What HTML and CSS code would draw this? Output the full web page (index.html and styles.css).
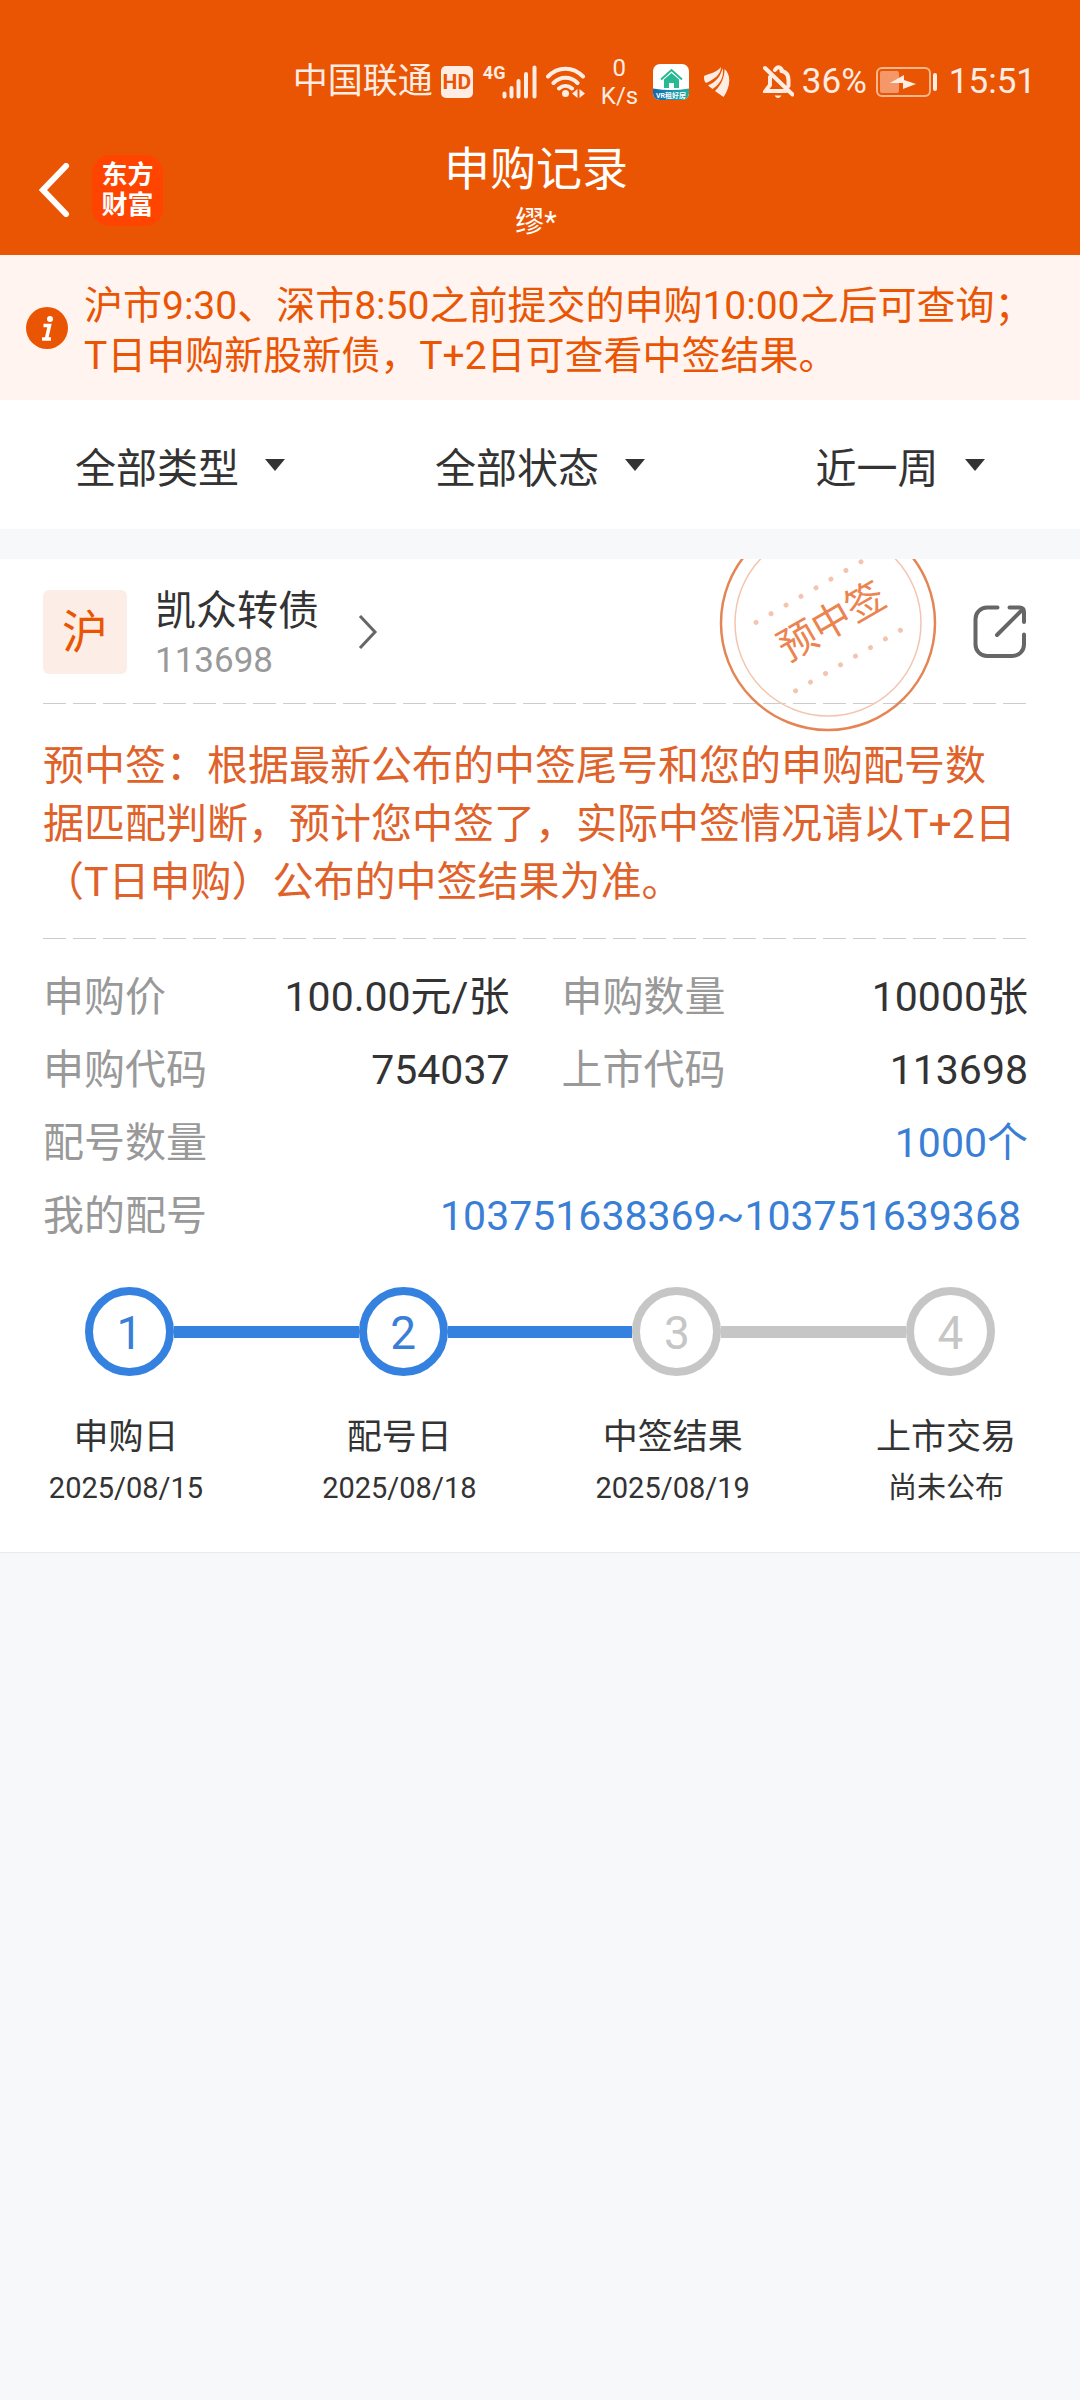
FILE: index.html
```html
<!DOCTYPE html>
<html lang="zh-CN">
<head>
<meta charset="utf-8">
<meta name="viewport" content="width=device-width, initial-scale=1">
<title>申购记录</title>
<link rel="stylesheet" href="styles.css">
</head>
<body>
<header class="header">
  <div class="status">
    <span class="status-text">中国联通</span>
    <span class="hd">HD</span>
    <span class="cell">
      <span class="cell-type">4G</span>
      <svg class="signal" width="35" height="34" viewBox="0 0 35 34" aria-hidden="true">
        <path d="M2.5 28.500v3M9.500 23v8.500M16.500 16v15.500M24 9v22.500M32.500 2.500v29" />
      </svg>
    </span>
    <svg class="wifi" width="40" height="34" viewBox="0 0 40 34" aria-hidden="true">
      <path class="line" d="M2 11.500C12 1 27 1 37 11.500M7.500 18c7-7 17-7 24 0M13 23.500c4-3.500 9-3.500 13 0"/>
      <circle cx="19.500" cy="28.500" r="3.500"/>
      <path d="M31.500 24v9l-5.500-4.500zM33.500 24v9l5.500-4.500z"/>
    </svg>
    <span class="speed"><span>0</span><span>K/s</span></span>
    <svg class="app" width="36" height="36" viewBox="0 0 36 36" aria-hidden="true">
      <defs>
        <linearGradient id="band"><stop offset="0" stop-color="#1267b5"/><stop offset="1" stop-color="#1fb2a0"/></linearGradient>
        <clipPath id="tile"><rect width="36" height="36" rx="7"/></clipPath>
      </defs>
      <g clip-path="url(#tile)">
        <rect width="36" height="36" fill="#fff"/>
        <path d="M0 24.500q18 3 36 0V36H0z" fill="url(#band)"/>
        <path d="M8 15.500L18.500 6 29 15.500" fill="none" stroke="#26b992" stroke-width="2"/>
        <path d="M11 15.500l7.500-6.500 7.500 6.500V24h-5v-5h-5v5h-5z" fill="#26b992"/>
        <text x="18" y="34" text-anchor="middle" class="app-label">VR租好房</text>
      </g>
    </svg>
    <svg class="wing" width="26" height="31" viewBox="0 0 26 31" aria-hidden="true">
      <path d="M0 9C6 6 12 6 17 0c0 7-6 12-15 16C0 14 0 12 0 9z"/>
      <path d="M4 18.500C12 15 17 9 18.500 1c2 8-2 16-10 21z"/>
      <path d="M11 24C17 18 20.500 11 20.500 2c7 6 6 18-1 28z"/>
    </svg>
    <svg class="bell" width="31" height="34" viewBox="0 0 31 34" aria-hidden="true">
      <path class="line" d="M12 5q3.500-5.500 7 0M18.500 6c5 1 7 5 7 9v6M7 12v8l-4.500 6H23M2 3l27.500 26.500"/>
      <path d="M11.500 30.500h7q-3.500 5-7 0z"/>
    </svg>
    <span class="status-text">36%</span>
    <svg class="battery" width="62" height="30" viewBox="0 0 62 30" aria-hidden="true">
      <rect x="1" y="1" width="53" height="28" rx="5" fill="none" stroke="#fbb68c" stroke-width="2"/>
      <rect x="4" y="4" width="19" height="22" rx="2" fill="#f4986a"/>
      <path d="M14 16l14-8v5l12 4-13 5v-6z" fill="#ffece2"/>
      <rect x="57" y="6" width="4" height="18" rx="2" fill="#ffece2"/>
    </svg>
    <time class="status-text">15:51</time>
  </div>
  <div class="titlebar">
    <div class="brand">
      <button class="back" type="button" aria-label="返回">
        <svg width="31" height="54" viewBox="0 0 31 54" aria-hidden="true"><path d="M27 3L4 27l23 24"/></svg>
      </button>
      <div class="logo">东方<br>财富</div>
    </div>
    <div class="heading">
      <h1>申购记录</h1>
      <p>缪*</p>
    </div>
  </div>
</header>

<main>
  <section class="notice">
    <svg width="42" height="42" viewBox="0 0 42 42" aria-hidden="true">
      <circle cx="21" cy="21" r="21" fill="#ea5504"/>
      <circle cx="24" cy="12" r="3" fill="#fff"/>
      <path d="M17.500 18.500h6l-3 13M16 32h9" fill="none" stroke="#fff" stroke-width="3.500"/>
    </svg>
    <p>沪市9:30、深市8:50之前提交的申购10:00之后可查询；<br>T日申购新股新债，T+2日可查看中签结果。</p>
  </section>

  <nav class="filters">
    <button type="button">全部类型<span class="caret"></span></button>
    <button type="button">全部状态<span class="caret"></span></button>
    <button type="button">近一周<span class="caret"></span></button>
  </nav>

  <article class="card">
    <svg class="stamp" width="220" height="220" viewBox="0 0 220 220" role="img" aria-label="预中签">
      <circle cx="110" cy="110" r="107" fill="none" stroke="#e58455" stroke-width="2.500"/>
      <circle cx="110" cy="110" r="93" fill="none" stroke="#f3c5b0" stroke-width="1.500"/>
      <g transform="rotate(-30 110 110)">
        <path class="dots" d="M48 73.500h122M48 152.500h122"/>
        <text x="114" y="124" text-anchor="middle">预中签</text>
      </g>
    </svg>
    <div class="bond">
      <div class="market">沪</div>
      <a class="bond-link" href="#bond">
        <span class="bond-name"><strong>凯众转债</strong><span>113698</span></span>
        <svg width="20" height="34" viewBox="0 0 20 34" aria-hidden="true"><path d="M2 1l15 16L2 33"/></svg>
      </a>
      <button class="share" type="button" aria-label="分享">
        <svg width="54" height="54" viewBox="0 0 54 54" aria-hidden="true">
          <path d="M24.500 2.500H14A11.500 11.500 0 0 0 2.500 14v25.500A11.500 11.500 0 0 0 14 51h25.500A11.500 11.500 0 0 0 51 39.500V29.500M24 30L49 5M36.500 2.500h10Q51 2.500 51 7v10"/>
        </svg>
      </button>
    </div>
    <div class="dash"></div>
    <p class="tip">预中签：根据最新公布的中签尾号和您的申购配号数据匹配判断，预计您中签了，实际中签情况请以T+2日（T日申购）公布的中签结果为准。</p>
    <div class="dash"></div>
    <dl class="facts">
      <div><dt>申购价</dt><dd>100.00元/张</dd></div>
      <div><dt>申购数量</dt><dd>10000张</dd></div>
      <div><dt>申购代码</dt><dd>754037</dd></div>
      <div><dt>上市代码</dt><dd>113698</dd></div>
      <div class="wide"><dt>配号数量</dt><dd><a href="#count">1000个</a></dd></div>
      <div class="wide"><dt>我的配号</dt><dd><a class="range" href="#numbers">103751638369~103751639368</a></dd></div>
    </dl>
    <div class="track">
      <span class="dot done">1</span><span class="bar done"></span>
      <span class="dot done">2</span><span class="bar done"></span>
      <span class="dot">3</span><span class="bar"></span>
      <span class="dot">4</span>
    </div>
    <ol class="steps">
      <li>申购日<small>2025/08/15</small></li>
      <li>配号日<small>2025/08/18</small></li>
      <li>中签结果<small>2025/08/19</small></li>
      <li>上市交易<small>尚未公布</small></li>
    </ol>
  </article>
</main>
</body>
</html>
```
FILE: styles.css
```css
* { box-sizing: border-box; }

body {
  margin: 0;
  background: #f7f8fa;
  color: #333;
  font-family: Roboto, "Noto Sans CJK SC", sans-serif;
  font-size: 41px;
}

h1, p, dl, dd, ol { margin: 0; padding: 0; }
h1, strong { font-weight: 400; }
button {
  padding: 0;
  border: 0;
  background: none;
  color: inherit;
  font: inherit;
}
a { color: inherit; text-decoration: none; }
svg { display: block; flex: none; }

/* Header */
.header {
  padding-top: 57px;
  background: #ea5504;
  color: #fff;
}
.status {
  display: flex;
  align-items: center;
  justify-content: flex-end;
  height: 50px;
  padding-right: 44px;
  color: #ffece2;
}
.status-text { font-size: 35px; line-height: 50px; }
.status svg { fill: #ffece2; }
.status .line, .signal path {
  fill: none;
  stroke: #ffece2;
  stroke-width: 4;
  stroke-linecap: round;
}
.hd {
  width: 32px;
  height: 32px;
  margin-left: 8px;
  border-radius: 5px;
  background: #ffece2;
  color: #ea5504;
  font-size: 21px;
  font-weight: 700;
  line-height: 32px;
  text-align: center;
}
.cell { display: flex; align-items: flex-start; margin-left: 10px; }
.cell-type { width: 19px; font-size: 18px; font-weight: 700; line-height: 16px; }
.wifi { margin-left: 9px; }
.speed {
  display: flex;
  flex-direction: column;
  width: 37px;
  margin: 0 15px;
  font-size: 24px;
  line-height: 28px;
  text-align: center;
}
.app-label { fill: #fff; font-size: 7px; font-weight: 700; }
.wing { margin-left: 15px; }
.bell { margin: 0 8px 0 33px; }
.battery { margin: 0 11px 0 9px; }

.titlebar {
  display: grid;
  grid-template-columns: 1fr auto 1fr;
  padding: 34px 42px 0 34px;
  height: 148px;
}
.brand { display: flex; height: 98px; align-items: center; }
.back { padding: 0 6px 0 5px; }
.back path { fill: none; stroke: #fff; stroke-width: 6; stroke-linecap: round; }
.logo {
  width: 71px;
  height: 71px;
  margin-left: 16px;
  border-radius: 18px;
  background: #ff4400;
  font-size: 26px;
  font-weight: 700;
  line-height: 30px;
  padding-top: 5px;
  text-align: center;
}
.heading { text-align: center; }
.heading h1 { font-size: 46px; line-height: 56px; }
.heading p { font-size: 29px; line-height: 50px; }

/* Notice */
.notice {
  display: flex;
  align-items: flex-start;
  gap: 16px;
  padding: 26px 26px 19px;
  background: #fff4ef;
  color: #ea5504;
  font-size: 39px;
  line-height: 50px;
}
.notice svg { margin-top: 26px; }

/* Filters */
.filters {
  display: grid;
  grid-template-columns: repeat(3, 1fr);
  height: 129px;
  background: #fff;
}
.filters button {
  display: flex;
  align-items: center;
  justify-content: center;
  gap: 26px;
}
.caret {
  border: 10px solid transparent;
  border-top: 12px solid #333;
  border-bottom: 0;
}

/* Record card */
.card {
  position: relative;
  overflow: hidden;
  margin-top: 30px;
  padding: 0 51px 39px 43px;
  border-bottom: 1px solid #ebebeb;
  background: #fff;
}
.stamp {
  position: absolute;
  top: -46px;
  right: 142px;
}
.stamp text { fill: #eb8450; font-size: 39px; }
.dots {
  fill: none;
  stroke: #f3c5b0;
  stroke-width: 5;
  stroke-linecap: round;
  stroke-dasharray: 0 17.300;
}
.bond {
  display: flex;
  align-items: center;
  height: 144px;
  padding-top: 2px;
}
.market {
  width: 84px;
  height: 84px;
  border-radius: 6px;
  background: #fceee6;
  color: #ea5504;
  font-size: 46px;
  line-height: 84px;
  text-align: center;
}
.bond-link { display: flex; align-items: center; gap: 39px; margin-left: 28px; }
.bond-name { display: flex; flex-direction: column; padding-top: 8px; line-height: 50px; }
.bond-name span { color: #999; font-size: 35px; }
.bond-link path { fill: none; stroke: #666; stroke-width: 3; }
.share { margin: 0 2px 0 auto; }
.share path { fill: none; stroke: #666; stroke-width: 4; stroke-linecap: round; }
.dash {
  height: 1px;
  background: repeating-linear-gradient(90deg, #ccc 0 23px, transparent 23px 30px);
}
.tip {
  padding: 33px 12px 27px 0;
  color: #e0622b;
  line-height: 58px;
}

.facts {
  display: grid;
  grid-template-columns: 1fr 1fr;
  column-gap: 52px;
  padding: 22px 1px 0 0;
  line-height: 73px;
}
.facts div { display: flex; justify-content: space-between; }
.facts .wide { grid-column: 1 / -1; }
.facts dt { color: #999; }
.facts a { color: #3a7fd5; }
.range { padding-right: 7px; }

/* Progress */
.track {
  display: flex;
  align-items: center;
  padding: 34px 34px 0 42px;
}
.dot {
  flex: none;
  width: 89px;
  height: 89px;
  border: 8px solid #c6c6c6;
  border-radius: 50%;
  color: #c6c6c6;
  font-size: 46px;
  line-height: 76px;
  text-align: center;
}
.bar { flex: 1; height: 12px; background: #c6c6c6; }
.dot.done { border-color: #3581e0; color: #3a7fd5; }
.bar.done { background: #3581e0; }
.steps {
  display: flex;
  justify-content: space-between;
  padding-top: 37px;
  list-style: none;
  font-size: 35px;
  line-height: 50px;
  text-align: center;
}
.steps li { width: 166px; }
.steps small { display: block; font-size: 29px; }
```
